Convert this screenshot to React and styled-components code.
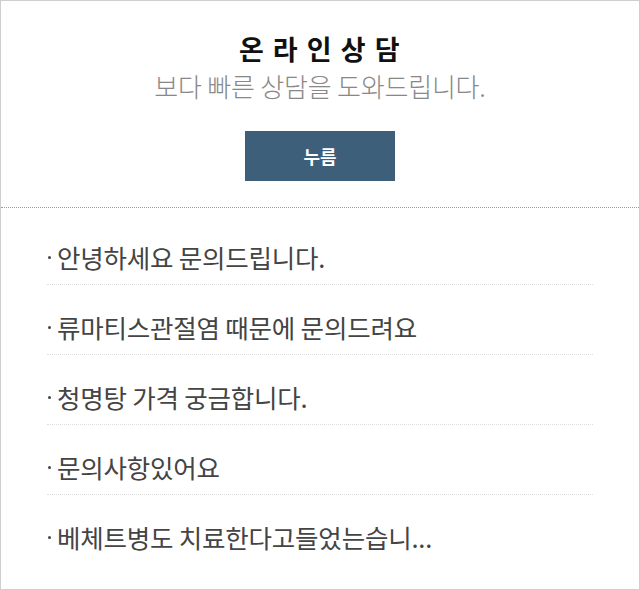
import styled, { createGlobalStyle } from "styled-components";

const questions = [
    "안녕하세요 문의드립니다.",
    "류마티스관절염 때문에 문의드려요",
    "청명탕 가격 궁금합니다.",
    "문의사항있어요",
    "베체트병도 치료한다고들었는습니...",
];

function App() {
    return (
        <>
            <GlobalStyle />
            <Box>
                <Top>
                    <Title>온 라 인 상 담</Title>
                    <Sub>보다 빠른 상담을 도와드립니다.</Sub>
                    <Button type="button">누름</Button>
                </Top>
                <List>
                    {questions.map((q, i) => (
                        <Item key={i} last={i === questions.length - 1}>
                            {q}
                        </Item>
                    ))}
                </List>
            </Box>
        </>
    );
}

const GlobalStyle = createGlobalStyle`
    html, body {
        margin: 0;
        padding: 0;
        background: #fff;
    }
    body {
        font-family: "Noto Sans CJK KR", "Noto Sans", sans-serif;
    }
`;

const Box = styled.div`
    width: 640px;
    height: 590px;
    box-sizing: border-box;
    border: 1px solid #cfcfcf;
    background: #fff;
`;

const Top = styled.div`
    height: 207px;
    border-bottom: 1px dotted #999;
    display: flex;
    flex-direction: column;
    align-items: center;
    padding-top: 31px;
    box-sizing: border-box;
`;

const Title = styled.h2`
    margin: 0;
    font-size: 27px;
    line-height: 34px;
    font-weight: 700;
    color: #111;
    letter-spacing: 1.5px;
`;

const Sub = styled.p`
    margin: 4px 0 0;
    font-size: 26px;
    line-height: 32px;
    font-weight: 300;
    color: #888;
    letter-spacing: -0.2px;
`;

const Button = styled.button`
    margin-top: 29px;
    width: 150px;
    height: 50px;
    border: 0;
    background: #3d5f7a;
    color: #fff;
    font-family: inherit;
    font-size: 18px;
    font-weight: 700;
    cursor: pointer;
`;

const List = styled.ul`
    list-style: none;
    margin: 0;
    padding: 7px 46px 0;
`;

const Item = styled.li`
    display: flex;
    align-items: center;
    padding-top: 14px;
    height: 55px;
    border-bottom: 1px dotted ${(props) => (props.last ? "transparent" : "#ddd")};
    font-size: 25.5px;
    color: #444;
    letter-spacing: -0.2px;

    &::before {
        content: "";
        width: 3px;
        height: 3px;
        border-radius: 50%;
        background: #444;
        margin: 2px 6px 0 1px;
        flex-shrink: 0;
    }
`;

export default App;
